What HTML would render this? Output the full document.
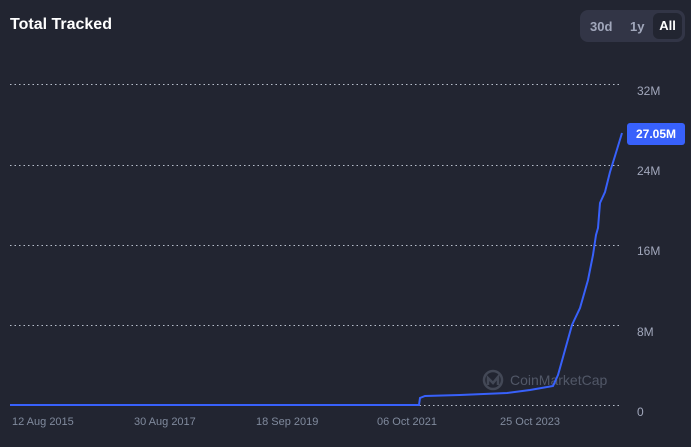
<!DOCTYPE html><html><head><style>
body{margin:0;width:691px;height:447px;background:#222531;font-family:"Liberation Sans",sans-serif;overflow:hidden;position:relative}
.t{position:absolute;left:10px;top:16px;color:#fff;font-weight:bold;font-size:16px}
.tg{position:absolute;left:580px;top:10px;width:105px;height:32px;background:#323546;border-radius:8px}
.tg span{position:absolute;top:9px;font-size:13px;font-weight:bold;color:#a1a7bb}
.tg .a{left:73px;top:3px;width:29px;height:26px;background:#222531;border-radius:6px;color:#fff;text-align:center;line-height:26px}
.y{position:absolute;left:637px;font-size:12px;color:#a1a7bb}
.x{position:absolute;top:416px;font-size:11px;color:#808a9d}
.lb{position:absolute;left:627px;top:123px;width:58px;height:22px;background:#3861fb;border-radius:3px;color:#fff;font-weight:bold;font-size:12px;text-align:center;line-height:22px}
</style></head><body>
<div class="t">Total Tracked</div>
<div class="tg"><span style="left:10px">30d</span><span style="left:50px">1y</span><span class="a">All</span></div>
<svg width="691" height="447" style="position:absolute;left:0;top:0">
<g stroke="#b8bfcc" stroke-dasharray="1.5 3" stroke-width="1">
<line x1="10" y1="84.5" x2="622" y2="84.5"/><line x1="10" y1="165.5" x2="622" y2="165.5"/><line x1="10" y1="245.5" x2="622" y2="245.5"/><line x1="10" y1="325.5" x2="622" y2="325.5"/><line x1="10" y1="405.5" x2="622" y2="405.5"/></g>
<g opacity="0.35" fill="none" stroke="#808a9d" stroke-width="2.5"><circle cx="493" cy="380" r="9"/><path d="M488 385 v-7 l5 5 l5 -6 v8"/></g>
<text x="510" y="385" fill="#808a9d" opacity="0.5" font-size="14" font-family="Liberation Sans">CoinMarketCap</text>
<polyline fill="none" stroke="#3861fb" stroke-width="2" points="10,405 419,405 420,398 425,396 460,395 507,393 530,390 553,386 558,375 565,350 572,325 580,308 588,280 593,255 596,235 598,228 600,203 605,192 610,172 615,156 622,133"/>
</svg>
<div class="lb">27.05M</div>
<div class="y" style="top:84px">32M</div><div class="y" style="top:164px">24M</div><div class="y" style="top:244px">16M</div><div class="y" style="top:325px">8M</div><div class="y" style="top:405px">0</div>
<div class="x" style="left:12px">12 Aug 2015</div><div class="x" style="left:134px">30 Aug 2017</div><div class="x" style="left:256px">18 Sep 2019</div><div class="x" style="left:377px">06 Oct 2021</div><div class="x" style="left:500px">25 Oct 2023</div>
</body></html>
